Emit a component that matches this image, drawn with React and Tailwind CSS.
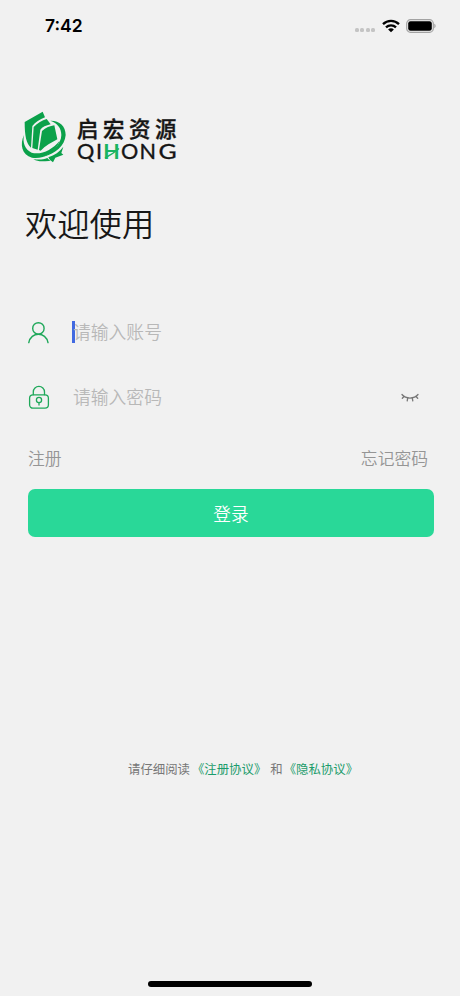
//App.jsx

import { useState } from "react";

const StatusBar = () => (
  <div className="flex h-[51px] items-center justify-between pl-[45px] pr-[24px] font-['Inter','Liberation_Sans',sans-serif]">
    <span className="mt-px text-[17.5px] font-semibold leading-none text-black">7:42</span>
    <div className="flex items-center">
      <div className="mr-[7px] mt-[9px] flex gap-[1.4px]">
        <i className="size-[4px] rounded-[1.5px] bg-[#c4c4c4]" />
        <i className="size-[4px] rounded-[1.5px] bg-[#c4c4c4]" />
        <i className="size-[4px] rounded-[1.5px] bg-[#c4c4c4]" />
        <i className="size-[4px] rounded-[1.5px] bg-[#c4c4c4]" />
      </div>
      <svg className="mr-[6px]" width="18" height="14" viewBox="0 0 18 14" fill="none" stroke="#000" strokeWidth="2.3">
        <path d="M1 5.1C5.5.7 12.5.7 17 5.1" />
        <path d="M4 8.3C6.8 5.6 11.2 5.6 14 8.3" />
        <path d="M6.1 10.4C7.7 8.9 10.3 8.9 11.9 10.4L9 13.3Z" fill="#000" stroke="none" />
      </svg>
      <svg width="30" height="14" viewBox="0 0 30 14">
        <rect x="0.7" y="0.7" width="26.6" height="12.6" rx="3.8" fill="none" stroke="#a3a3a3" strokeWidth="1.2" />
        <rect x="2.2" y="2.2" width="23.6" height="9.6" rx="2.3" fill="#000" />
        <path d="M28.3 4.8C30 5.4 30 8.6 28.3 9.2Z" fill="#a3a3a3" />
      </svg>
    </div>
  </div>
);

const Logo = () => (
  <svg width="170" height="65" viewBox="0 0 170 65">
    <g transform="scale(.33333)" fill="#0ba14a">
      {/* books */}
      <path d="M29 51L83 20L90 37C74 44 61 52 52 63L48 128C34 116 29 94 29 51Z" />
      <path d="M56 66C68 54 81 46 95 42L107 58C93 61 82 66 76 74L68 134L52 129Z" />
      <path d="M81 78C92 68 105 63 118 61L127 103C110 112 90 123 77 137L72 135Z" />
      {/* orbit */}
      <path d="M106 47C132 46 152 62 152 90C150 122 121 146 86 155C114 140 139 116 139 90C139 69 127 54 106 47Z" />
      <path d="M27 90C22 113 30 134 50 143C78 151 112 134 134 107C122 143 82 164 51 158C20 150 14 117 27 90Z" />
      <path d="M100 157C119 151 134 140 145 125L139 144L145 149L121 158L114 172L105 165Z" />
      <path d="M55 162C70 165 84 164 97 159L106 168C88 167 72 173 55 162Z" />
    </g>
    <text
      x="62 88 114 140"
      y="31.5"
      className="font-['Noto_Sans_CJK_SC',sans-serif] text-[21.4px] font-medium"
      fill="#151515"
      stroke="#151515"
      strokeWidth="0.4"
    >
      启宏资源
    </text>
    <g className="font-['Lato',sans-serif] text-[21.6px]" fill="#151515" stroke="#151515" strokeWidth="0.35">
      <text x="62 81" y="54.2">QI</text>
      <text x="106 124.6" y="54.2">ON</text>
      <text transform="translate(143.5 54.2) scale(1.15 1)">G</text>
    </g>
    <text
      x="88.3"
      y="54.2"
      className="font-['Lato',sans-serif] text-[21.4px] font-bold"
      fill="#19b461"
    >
      H
    </text>
    <path d="M90 53C96 50 100 47 104 43.5" fill="none" stroke="#19b461" strokeWidth="1.4" />
  </svg>
);

const UserIcon = () => (
  <svg width="22" height="24" viewBox="0 0 22 24" fill="none" stroke="#1fa85a" strokeWidth="1.4" strokeLinecap="round">
    <circle cx="10.4" cy="8.4" r="5.7" />
    <path d="M.8 22.6C1.8 17.2 6 14.2 10.4 14.2S19 17.2 20 22.6" />
  </svg>
);

const LockIcon = () => (
  <svg width="22" height="24" viewBox="0 0 22 24" fill="none" stroke="#1fa85a" strokeWidth="1.3" strokeLinecap="round">
    <rect x="1.6" y="9.8" width="18.8" height="13.4" rx="3.4" />
    <path d="M5.3 9.7V7A5.6 5.6 0 0 1 16.5 7V9.7" />
    <circle cx="11" cy="15" r="2.6" />
    <path d="M11 17.6V20" />
  </svg>
);

const EyeClosedIcon = () => (
  <svg width="18" height="10" viewBox="0 0 18 10" fill="none" stroke="#777" strokeWidth="1.3" strokeLinecap="round">
    <path d="M1 1.5C5 6.2 13 6.2 17 1.5" />
    <path d="M3 3.5L1.3 5.2M6.7 5.2L6.2 7.8M11.3 5.2L11.8 7.8M15 3.5L16.7 5.2" />
  </svg>
);

const App = () => {
  const [account, setAccount] = useState("");
  const [password, setPassword] = useState("");

  return (
    <div className="flex h-[996px] w-[460px] flex-col overflow-hidden bg-[#f1f1f1] font-['Noto_Sans_CJK_SC',sans-serif]">
      <StatusBar />

      {/* Brand */}
      <div className="mt-[54px] pl-[15px]">
        <Logo />
      </div>
      <h1 className="mt-[28px] pl-[25px] text-[32.3px] font-[350] leading-[48px] text-[#171717]">欢迎使用</h1>

      {/* Login form */}
      <form className="mt-[74px] flex flex-col px-[28px]" onSubmit={(e) => e.preventDefault()}>
        <div className="flex h-[24px] items-center">
          <UserIcon />
          <i className="ml-[22px] h-[22px] w-[2.5px] bg-[#4169e1]" />
          <input
            type="text"
            value={account}
            onChange={(e) => setAccount(e.target.value)}
            placeholder="请输入账号"
            className="-ml-[1.5px] mb-[2px] h-[24px] w-[280px] bg-transparent text-[17.8px] font-[350] outline-none placeholder:text-[#b8b8b8]"
          />
        </div>
        <div className="mt-[41px] flex h-[24px] items-center">
          <LockIcon />
          <input
            type="password"
            value={password}
            onChange={(e) => setPassword(e.target.value)}
            placeholder="请输入密码"
            className="mb-[2px] ml-[23px] h-[24px] flex-1 bg-transparent text-[17.8px] font-[350] outline-none placeholder:text-[#b8b8b8]"
          />
          <button type="button" className="mr-[13px] mt-[2px]">
            <EyeClosedIcon />
          </button>
        </div>
        <div className="mt-[37px] flex justify-between pr-[4px] text-[16.8px] font-[350] leading-[24px] text-[#959595]">
          <span>注册</span>
          <span>忘记密码</span>
        </div>
        <button
          type="submit"
          className="mt-[19px] h-[48px] w-[406px] rounded-[7px] bg-[#29d898] text-[17.7px] font-[350] leading-[48px] text-white"
        >
          登录
        </button>
      </form>

      {/* Agreements */}
      <p className="mt-[223px] flex whitespace-pre pl-[128px] text-[12.4px] leading-[18px] text-[#777]">
        <span>请仔细阅读</span>
        <span className="ml-[2px] text-[#1c9c6c]">《注册协议》</span>
        <span className="ml-[4px]">和</span>
        <span className="ml-px text-[#1c9c6c]">《隐私协议》</span>
      </p>

      <div className="mb-[9px] ml-[148px] mt-auto h-[6px] w-[164px] rounded-full bg-black" />
    </div>
  );
};

export default App;
